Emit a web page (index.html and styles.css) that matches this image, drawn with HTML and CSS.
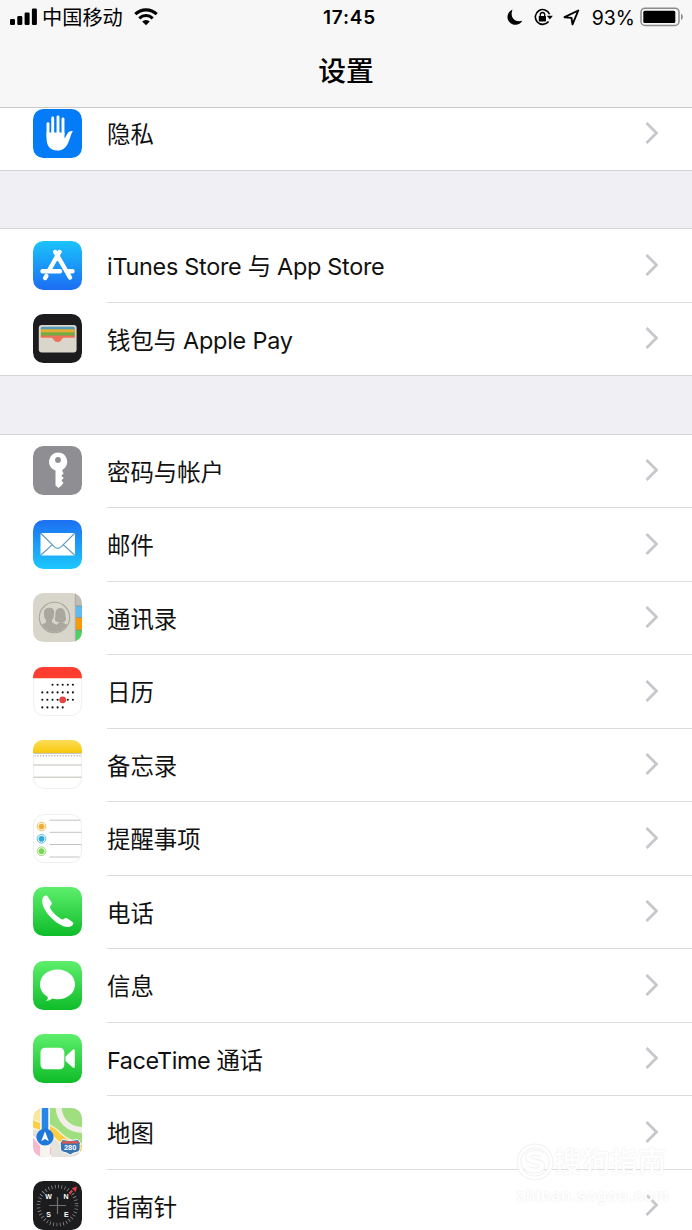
FILE: index.html
```html
<!DOCTYPE html>
<html lang="zh-CN">
<head>
  <meta charset="UTF-8" />
  <meta name="viewport" content="width=device-width, initial-scale=1.0"/>
  <title>设置</title>
  <link rel="stylesheet" href="styles.css">
</head>
<body>

  <header class="header">
    <div class="status">
      <div class="status-left">
        <svg width="28" height="18" viewBox="0 0 28 18">
          <rect x="0" y="11" width="5" height="6" rx="1.3"/>
          <rect x="7.3" y="8" width="5" height="9" rx="1.3"/>
          <rect x="14.6" y="4.5" width="5" height="12.5" rx="1.3"/>
          <rect x="21.9" y="0.5" width="5" height="16.5" rx="1.3"/>
        </svg>
        <span class="carrier">中国移动</span>
        <svg class="wifi" width="24" height="18" viewBox="0 0 24 18">
          <path d="M1.3 6.2 A15.5 15.5 0 0 1 22.7 6.2" fill="none" stroke="#000" stroke-width="3.2"/>
          <path d="M5.3 10.3 A9.7 9.7 0 0 1 18.7 10.3" fill="none" stroke="#000" stroke-width="3"/>
          <path d="M8.2 13.4 A5.5 5.5 0 0 1 15.8 13.4 L12 17.3 Z"/>
        </svg>
      </div>
      <div class="time">17:45</div>
      <div class="status-right">
        <svg width="16" height="17" viewBox="0 0 16 17">
          <path d="M5.5 0.5 C0.5 3 -1 8.5 2 12.5 C5.5 17.2 12.5 17 15.3 11.8 C7.5 14 2.5 8 5.5 0.5 Z"/>
        </svg>
        <svg class="lock" width="19" height="18" viewBox="0 0 19 18">
          <path d="M15.6 6.2 A7.4 7.4 0 1 0 14.6 13.5" fill="none" stroke="#000" stroke-width="1.6"/>
          <path d="M12.8 7.8 H18.8 L15.9 11.5 Z"/>
          <rect x="4.8" y="8" width="7.2" height="5.4" rx="0.6"/>
          <path d="M6.3 8.5 V6.7 A2.2 2.2 0 0 1 10.700 6.7 V8.5" fill="none" stroke="#000" stroke-width="1.3"/>
        </svg>
        <svg class="location" width="17" height="17" viewBox="0 0 17 17">
          <path d="M1.500 8.200 L15.300 1.500 L9.500 15.300 L8.500 8.900 Z" fill="none" stroke="#000" stroke-width="1.9" stroke-linejoin="round"/>
        </svg>
        <span class="percent">93%</span>
        <svg class="battery" width="44" height="20" viewBox="0 0 44 20">
          <rect x="1" y="1.2" width="38" height="17.3" rx="4" fill="none" stroke="#8c8c8c" stroke-width="1.5"/>
          <rect x="3.3" y="3.7" width="32" height="12.3" rx="1.5"/>
          <path d="M41 6.8 C43.5 8 43.5 12 41 13 Z" fill="#8c8c8c"/>
        </svg>
      </div>
    </div>
    <h1>设置</h1>
  </header>

  <main class="list">
    <section class="group">
      <div class="row">
        <svg class="icon" viewBox="0 0 49 49">
          <rect width="49" height="49" rx="10.5" fill="#047cf8"/>
          <path d="M15 14.8 V28 M19.7 9 V25 M25 8 V25 M30 10 V25" stroke="#fff" stroke-width="2.9" stroke-linecap="round"/>
          <path d="M13.6 23.5 H31.5 V29.5 C32.5 29 33.8 24.5 36 22.8 C37.6 21.6 39.5 21.8 39.8 22.2 C37.8 25 37.3 29 35.3 33.5 C33 39 29.5 41.5 24.5 41.5 C17.5 41.5 13.6 37 13.6 30 Z" fill="#fff"/>
        </svg>
        <div class="content"><span>隐私</span><svg class="chevron" viewBox="0 0 13 22"><path d="M1.5 1 L11.5 11 L1.5 21"/></svg></div>
      </div>
    </section>

    <section class="group">
      <div class="row">
        <svg class="icon" viewBox="0 0 49 49">
          <defs><linearGradient id="store" x2="0" y2="1"><stop offset="0" stop-color="#1bc3fb"/><stop offset="1" stop-color="#1b6df3"/></linearGradient></defs>
          <rect width="49" height="49" rx="10.5" fill="url(#store)"/>
          <g fill="none" stroke="#fff" stroke-width="4.4" stroke-linecap="round">
            <path d="M26.5 11 L16.8 28 M22.3 11 L37 36.5 M9.5 30.2 H27 M33.5 30.2 H39.5 M13.3 35 L12.2 37"/>
          </g>
        </svg>
        <div class="content"><span class="latin-long">iTunes Store 与 App Store</span><svg class="chevron" viewBox="0 0 13 22"><path d="M1.5 1 L11.5 11 L1.5 21"/></svg></div>
      </div>
      <div class="row">
        <svg class="icon" viewBox="0 0 49 49">
          <rect width="49" height="49" rx="10.5" fill="#1c1c1e"/>
          <rect x="5.800" y="11" width="37.8" height="27.5" rx="3" fill="#dad6cc"/>
          <rect x="7.8" y="12.8" width="34" height="5" rx="1.5" fill="#529bbd"/>
          <rect x="7.8" y="15.2" width="34" height="4" fill="#e4ae35"/>
          <rect x="7.8" y="18.3" width="34" height="4" fill="#72ad43"/>
          <path d="M7.8 21.6 H41.8 V23.7 H31 C28.5 23.7 28.7 28 24.6 28 C20.5 28 20.7 23.7 18.2 23.7 H7.8 Z" fill="#ed7258"/>
        </svg>
        <div class="content"><span class="latin-pay">钱包与 Apple Pay</span><svg class="chevron" viewBox="0 0 13 22"><path d="M1.5 1 L11.5 11 L1.5 21"/></svg></div>
      </div>
    </section>

    <section class="group">
      <div class="row">
        <svg class="icon" viewBox="0 0 49 49">
          <rect width="49" height="49" rx="10.5" fill="#8e8e93"/>
          <path fill-rule="evenodd" d="M25 6.500 A9.200 9.200 0 0 1 29.5 23.7 V26 L30.8 27.3 L28.7 29.2 V30.2 L30.8 32 L28.7 34 V35 L30.5 36.7 L28.5 39.5 L25.5 42 L22.5 39.5 V24.5 A9.2 9.2 0 0 1 25 6.5 Z M25 11 A2.9 2.9 0 1 0 25 16.8 A2.9 2.9 0 1 0 25 11 Z" fill="#fff"/>
        </svg>
        <div class="content"><span>密码与帐户</span><svg class="chevron" viewBox="0 0 13 22"><path d="M1.5 1 L11.5 11 L1.5 21"/></svg></div>
      </div>
      <div class="row">
        <svg class="icon" viewBox="0 0 49 49">
          <defs><linearGradient id="mail" x2="0" y2="1"><stop offset="0" stop-color="#1d6ff2"/><stop offset="1" stop-color="#1bc8fc"/></linearGradient></defs>
          <rect width="49" height="49" rx="10.5" fill="url(#mail)"/>
          <rect x="7.5" y="13" width="34.5" height="22.5" rx="1.5" fill="#fff"/>
          <path d="M8 13.5 L21.5 26.8 Q24.7 29.7 28 26.8 L41.5 13.5 M8 35 L19.3 24.6 M41.5 35 L30.2 24.6" fill="none" stroke="#5c98bd" stroke-width="1.1"/>
        </svg>
        <div class="content"><span>邮件</span><svg class="chevron" viewBox="0 0 13 22"><path d="M1.5 1 L11.5 11 L1.5 21"/></svg></div>
      </div>
      <div class="row">
        <svg class="icon" viewBox="0 0 49 49">
          <defs><clipPath id="round"><rect width="49" height="49" rx="10.5"/></clipPath><clipPath id="people"><circle cx="21.5" cy="24.5" r="14.5"/></clipPath></defs>
          <g clip-path="url(#round)">
            <rect width="49" height="49" fill="#d8d5cb"/>
            <rect x="42.7" width="7" height="13" fill="#bfbdb7"/>
            <rect x="42.7" y="13" width="7" height="11.5" fill="#5ebcf5"/>
            <rect x="42.7" y="24.5" width="7" height="12.5" fill="#f99a0b"/>
            <rect x="42.7" y="37" width="7" height="12" fill="#4cd263"/>
            <path d="M42.3 0 V49" stroke="#aaa79e" stroke-width="1"/>
            <path d="M43 13 H49 M43 24.5 H49 M43 37 H49" stroke="#888" stroke-width="0.7"/>
          </g>
          <g clip-path="url(#people)" fill="#aaa79f">
            <path d="M23 35 L24 31 L27 29.5 C23 29 21.5 28 22 26 C23 22 21 16 27 15 C33 15 32 22 33 26 C33 28 31.5 29 29.5 29.5 L35 32 V38 H23 Z"/>
            <path d="M5 33 L13 29.5 V27 C11.5 26 11 23 11 20 C11 16.5 13 14.8 16.5 14.8 C20 14.8 21.5 17 21.2 20 C21 23.5 20.5 26 19 27 V29.5 L25 32.5 C28 34 28 37 28 40 H5 Z"/>
          </g>
          <circle cx="21.5" cy="24.5" r="15.2" fill="none" stroke="#aaa79f" stroke-width="1.1"/>
        </svg>
        <div class="content"><span>通讯录</span><svg class="chevron" viewBox="0 0 13 22"><path d="M1.5 1 L11.5 11 L1.5 21"/></svg></div>
      </div>
      <div class="row">
        <svg class="icon" viewBox="0 0 49 49">
          <rect x="0.5" y="0.5" width="48" height="48" rx="10.5" fill="#fff" stroke="#efefef"/>
          <path d="M0 11.2 C0 4 4 0 10.5 0 H38.5 C45 0 49 4 49 11.2 Z" fill="#fc3d30"/>
          <g fill="none" stroke="#111" stroke-width="2.1" stroke-linecap="round" stroke-dasharray="0 5.1">
            <path d="M19.5 17.7 H40.5"/>
            <path d="M9.3 25.4 H40.5"/>
            <path d="M9.3 32.8 H40.5"/>
            <path d="M9.3 40.4 H30.5"/>
          </g>
          <circle cx="29.7" cy="32.8" r="3.4" fill="#e54543"/>
        </svg>
        <div class="content"><span>日历</span><svg class="chevron" viewBox="0 0 13 22"><path d="M1.5 1 L11.5 11 L1.5 21"/></svg></div>
      </div>
      <div class="row">
        <svg class="icon" viewBox="0 0 49 49">
          <defs><linearGradient id="notes" x2="0" y2="1"><stop offset="0" stop-color="#fbdc59"/><stop offset="1" stop-color="#f8c90a"/></linearGradient></defs>
          <rect x="0.5" y="0.5" width="48" height="48" rx="10.5" fill="#fff" stroke="#efefef"/>
          <path d="M0 13 V11 C0 4 4 0 10.5 0 H38.5 C45 0 49 4 49 11 V13 Z" fill="url(#notes)"/>
          <path d="M0.5 13.4 H48.5 M0.5 25 H48.5 M0.5 37.2 H48.5" stroke="#b9b6ad" stroke-width="0.9"/>
          <path d="M1.5 15.8 H48" stroke="#b5b5b5" stroke-width="1.5" stroke-dasharray="1.2 1.6"/>
        </svg>
        <div class="content"><span>备忘录</span><svg class="chevron" viewBox="0 0 13 22"><path d="M1.5 1 L11.5 11 L1.5 21"/></svg></div>
      </div>
      <div class="row">
        <svg class="icon" viewBox="0 0 49 49">
          <rect x="0.5" y="0.5" width="48" height="48" rx="10.5" fill="#fff" stroke="#efefef"/>
          <path d="M16.5 6.2 H47.5 M16.5 18.3 H48.5 M16.5 30.5 H48.5 M16.5 43 H46.5" stroke="#bcbcbc" stroke-width="0.9"/>
          <g stroke-width="0.8">
            <g fill="#f1ad35" stroke="#f1ad35"><circle cx="8.5" cy="12.5" r="4.3" fill="none"/><circle cx="8.5" cy="12.5" r="2.6"/></g>
            <g fill="#31a9d8" stroke="#31a9d8"><circle cx="8.5" cy="24.8" r="4.3" fill="none"/><circle cx="8.5" cy="24.8" r="2.6"/></g>
            <g fill="#79d64f" stroke="#79d64f"><circle cx="8.5" cy="37.2" r="4.3" fill="none"/><circle cx="8.5" cy="37.2" r="2.6"/></g>
          </g>
        </svg>
        <div class="content"><span>提醒事项</span><svg class="chevron" viewBox="0 0 13 22"><path d="M1.5 1 L11.5 11 L1.5 21"/></svg></div>
      </div>
      <div class="row">
        <svg class="icon" viewBox="0 0 49 49">
          <defs><linearGradient id="green" x2="0" y2="1"><stop offset="0" stop-color="#5eef6c"/><stop offset="1" stop-color="#0ebc29"/></linearGradient></defs>
          <rect width="49" height="49" rx="10.5" fill="url(#green)"/>
          <path d="M10 10.5 C11.5 8.5 13.5 8 14.5 9.3 L18.5 15.3 C19.3 16.7 18.6 17.7 17.5 18.7 C16.5 19.7 16.8 20.5 18 22.5 C20.5 26.3 24 29.5 27.7 31.7 C29.3 32.7 30.2 32.7 31.2 31.8 C32.3 30.8 33.3 30.7 34.5 31.6 L39.5 35 C41 36 40.5 37.5 38.5 39 C35.5 41 31.5 40 27.5 37.8 C20.5 34 13.5 27 10.5 20 C9 16.3 8.7 13 10 10.5 Z" fill="#fff"/>
        </svg>
        <div class="content"><span>电话</span><svg class="chevron" viewBox="0 0 13 22"><path d="M1.5 1 L11.5 11 L1.5 21"/></svg></div>
      </div>
      <div class="row">
        <svg class="icon" viewBox="0 0 49 49">
          <rect width="49" height="49" rx="10.5" fill="url(#green)"/>
          <path d="M24.5 8.5 C34.5 8.5 42 15 42 23.5 C42 32 34.5 38.3 24.5 38.3 C22.5 38.3 20.8 38 19.2 37.6 C17.3 39.3 15 40 12.8 39.8 C14.5 38.6 15 37.2 14.8 35.9 C10 33.2 7 28.7 7 23.5 C7 15 14.5 8.5 24.5 8.5 Z" fill="#fff"/>
        </svg>
        <div class="content"><span>信息</span><svg class="chevron" viewBox="0 0 13 22"><path d="M1.5 1 L11.5 11 L1.5 21"/></svg></div>
      </div>
      <div class="row">
        <svg class="icon" viewBox="0 0 49 49">
          <rect width="49" height="49" rx="10.5" fill="url(#green)"/>
          <rect x="7.5" y="13.8" width="23.8" height="21.5" rx="4.5" fill="#fff"/>
          <path d="M32.5 22.5 L39.5 16 Q41.8 14.3 41.8 17 V32.5 Q41.8 35 39.5 33.2 L32.5 27 Z" fill="#fff"/>
        </svg>
        <div class="content"><span class="latin-face">FaceTime 通话</span><svg class="chevron" viewBox="0 0 13 22"><path d="M1.5 1 L11.5 11 L1.5 21"/></svg></div>
      </div>
      <div class="row">
        <svg class="icon" viewBox="0 0 49 49">
          <g clip-path="url(#round)">
            <rect width="49" height="49" fill="#e6e3dc"/>
            <path d="M0 0 H7 V17 L0 13 Z" fill="#f5e6a0"/>
            <path d="M17 0 H49 V37 C38 34 26 27 17 16 Z" fill="#9fdf80"/>
            <path d="M25.5 -2 C26 13 36 22 51 22" fill="none" stroke="#f1efe8" stroke-width="6"/>
            <path d="M0 26 L18 41 V49 H0 Z" fill="#f5b8cf"/>
            <path d="M-1 15 C8 21 16 17 26 29 C34 36 43 39 51 41" fill="none" stroke="#fbf4dc" stroke-width="9"/>
            <path d="M-1 15 C8 21 16 17 26 29 C34 36 43 39 51 41" fill="none" stroke="#fbce45" stroke-width="6.5"/>
            <path d="M0 28 L18 49" stroke="#fff" stroke-width="2"/>
            <path d="M12 0 V49" stroke="#f6f4ef" stroke-width="10"/>
            <path d="M12 0 V26" stroke="#2886e6" stroke-width="6.5"/>
          </g>
          <circle cx="12" cy="29" r="8.6" fill="#1e78d9"/>
          <path d="M12 23.3 L15.8 33.3 L12 31 L8.2 33.3 Z" fill="#fff"/>
          <path d="M29.5 31.5 Q37 33.5 45 31.5 L47.5 35 C46 38 49 42 44.5 44 Q39.5 45 37.2 47 Q35 45 30 44 C25.5 42 28.500 38 27 35 Z" fill="#3974b2" stroke="#fff" stroke-width="1"/>
          <path d="M29 34.4 H45.5" stroke="#dc5952" stroke-width="2.4"/>
          <text class="shield" x="37.2" y="42.2">280</text>
        </svg>
        <div class="content"><span>地图</span><svg class="chevron" viewBox="0 0 13 22"><path d="M1.5 1 L11.5 11 L1.5 21"/></svg></div>
      </div>
      <div class="row">
        <svg class="icon" viewBox="0 0 49 49">
          <rect width="49" height="49" rx="10.5" fill="#1c1c1e"/>
          <circle cx="24.5" cy="24.5" r="19" fill="none" stroke="#999" stroke-width="3.6" stroke-dasharray="0.7 2.62"/>
          <path d="M24.5 16 V33 M16 24.5 H33" stroke="#727272" stroke-width="1.2"/>
          <path d="M44 5.500 L42.7 11 L38.7 7.3 Z" fill="#ed394a"/>
          <path d="M39.5 9.8 L36.5 13" stroke="#ed394a" stroke-width="1.5"/>
          <g class="compass">
            <text x="15.5" y="17.8">W</text>
            <text x="33" y="17.8">N</text>
            <text x="15.5" y="36">S</text>
            <text x="33.3" y="36">E</text>
          </g>
        </svg>
        <div class="content"><span>指南针</span><svg class="chevron" viewBox="0 0 13 22"><path d="M1.5 1 L11.5 11 L1.5 21"/></svg></div>
      </div>
    </section>
  </main>

  <div class="watermark">
    <div class="brand">
      <svg width="38" height="38" viewBox="0 0 38 38">
        <circle cx="19" cy="19" r="16" fill="none" stroke="#f1f1f1" stroke-width="5"/>
        <circle cx="19" cy="19" r="16" fill="none" stroke="#fff" stroke-width="3"/>
        <path d="M27 12 C20 8 11 10 12 15 C13 20 26 17 26 23 C26 28 16 29 10 25" fill="none" stroke="#f1f1f1" stroke-width="6"/>
        <path d="M27 12 C20 8 11 10 12 15 C13 20 26 17 26 23 C26 28 16 29 10 25" fill="none" stroke="#fff" stroke-width="4"/>
      </svg>
      <span>搜狗指南</span>
    </div>
    <div class="site">zhinan.sogou.com</div>
  </div>

</body>
</html>
```
FILE: styles.css
```css
body {
  margin: 0;
  height: 1230px;
  overflow: hidden;
  position: relative;
  background-color: #efeff4;
  color: #111;
  font-family: Inter, 'Noto Sans CJK SC', sans-serif;
}

svg {
  display: block;
  flex-shrink: 0;
}

.header {
  position: relative;
  z-index: 1;
  height: 108px;
  box-sizing: border-box;
  background: #f7f7f7;
  border-bottom: 1px solid #c9c9cb;
}

.status {
  display: grid;
  grid-template-columns: 1fr auto 1fr;
  align-items: center;
  height: 34px;
  padding: 0 8px 0 10px;
  color: #000;
}

.status-left,
.status-right {
  display: flex;
  align-items: center;
}

.status-right {
  justify-content: flex-end;
}

.carrier {
  margin-left: 4px;
  padding-top: 2px;
  font-size: 20.2px;
  line-height: 32px;
}

.wifi {
  margin-left: 11px;
}

.time {
  padding: 1px 0 0 5px;
  font-size: 19px;
  font-weight: 600;
  letter-spacing: 0.8px;
}

.lock {
  margin-left: 11px;
}

.location {
  margin-left: 10px;
}

.percent {
  margin-left: 12px;
  padding-top: 1px;
  font-size: 19.5px;
}

.battery {
  margin-left: 5px;
}

h1 {
  margin: 0;
  padding-top: 1px;
  font-size: 27.8px;
  line-height: 72px;
  font-weight: 500;
  text-align: center;
  color: #000;
}

/* first row is scrolled partly under the header */
.list {
  height: 1134px;
  margin-top: -12px;
  overflow: hidden;
}

.group {
  margin-bottom: 57.5px;
  background: #fff;
  border-top: 1px solid #d3d3d8;
}

.row {
  display: flex;
  align-items: center;
  height: 73.5px;
  padding-left: 33px;
}

.icon {
  width: 49px;
  height: 49px;
  margin-top: -1px;
}

.content {
  display: flex;
  align-items: center;
  justify-content: space-between;
  flex: 1;
  height: 100%;
  box-sizing: border-box;
  margin-left: 25px;
  padding-right: 34px;
  border-bottom: 1px solid #dcdcdf;
  font-size: 23.4px;
  line-height: 34px;
}

.content span {
  padding-top: 4px;
}

.row:last-child {
  box-shadow: inset 0 -1px #d3d3d8;
}

.row:last-child .content {
  border-bottom-color: transparent;
}

.latin-long {
  letter-spacing: -0.28px;
}

.latin-pay {
  letter-spacing: -0.2px;
}

.latin-face {
  letter-spacing: -0.4px;
}

.chevron {
  width: 13px;
  height: 22px;
  margin-top: -1px;
  fill: none;
  stroke: #c7c7cc;
  stroke-width: 2.8;
}

.shield {
  font: bold 7.5px 'Liberation Sans', sans-serif;
  text-anchor: middle;
  fill: #fff;
}

.compass {
  font: bold 7px 'Liberation Sans', sans-serif;
  text-anchor: middle;
  fill: #fff;
}

.watermark {
  position: absolute;
  left: 516px;
  top: 1143px;
  width: 154px;
  z-index: 2;
  color: #fff;
  text-shadow: 0 0 2px #e4e4e4;
}

.brand {
  display: flex;
  align-items: center;
  font-size: 28px;
  line-height: 38px;
  font-weight: 500;
}

.site {
  margin-top: 4px;
  font-size: 16px;
  line-height: 20px;
  font-weight: 600;
  letter-spacing: 0.6px;
  white-space: nowrap;
}
```
